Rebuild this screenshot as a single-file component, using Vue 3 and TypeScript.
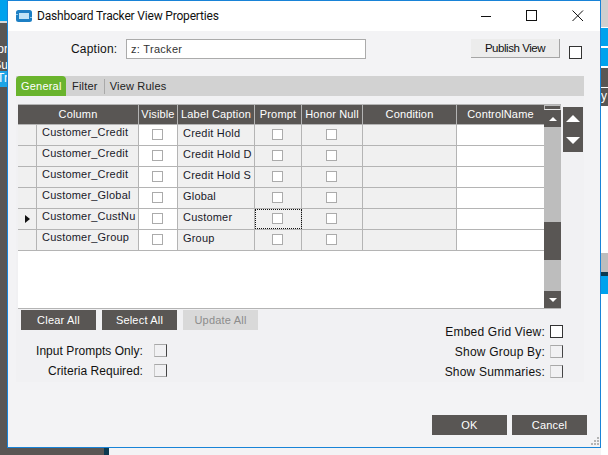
<template>
  <div class="desk">
    <!-- app behind the dialog, only its edges show -->
    <div class="behind-left">
      <div class="bl-blue"></div>
      <div class="bl-gray">
        <span class="bl-t one">or</span>
        <span class="bl-t two">Su</span>
        <span class="bl-t three">Tr</span>
      </div>
    </div>
    <div class="behind-bottom">
      <div class="bb-gray"></div>
      <div class="bb-line"></div>
    </div>
    <div class="behind-right">
      <div class="br-a"></div>
      <div class="br-b"></div>
      <div class="br-b second"></div>
      <div class="br-c"></div>
      <div class="br-d"><span>y</span></div>
      <div class="br-e"></div>
      <div class="br-f"></div>
      <div class="br-g"></div>
      <div class="br-h"></div>
    </div>

    <div class="dialog">
      <div class="titlebar">
        <svg class="app-icon" width="16" height="12" viewBox="0 0 16 12">
          <rect x="0" y="0" width="16" height="12" rx="2.5" fill="#1c7fc4" />
          <rect x="3" y="3" width="10" height="6" fill="#bfe3f7" />
          <rect x="0" y="4" width="2" height="1" fill="#8fc8ec" />
          <rect x="14" y="7" width="2" height="1" fill="#8fc8ec" />
        </svg>
        <span class="title">Dashboard Tracker View Properties</span>
        <div class="win-btns">
          <svg width="12" height="12" viewBox="0 0 12 12"><path d="M1 6.5H11" stroke="#111" fill="none" /></svg>
          <svg width="12" height="12" viewBox="0 0 12 12"><rect x="0.5" y="0.5" width="10" height="10" stroke="#111" fill="none" /></svg>
          <svg width="12" height="12" viewBox="0 0 12 12"><path d="M0.5 0.5L11 11M11 0.5L0.5 11" stroke="#111" fill="none" /></svg>
        </div>
      </div>

      <div class="body">
        <div class="caption-row">
          <label class="caption-label">Caption:</label>
          <div class="caption-input">z: Tracker</div>
          <button class="publish">Publish View</button>
          <span class="box dark big"></span>
        </div>

        <div class="panel">
          <div class="tabs">
            <span class="tab active">General</span>
            <span class="tab">Filter</span>
            <span class="tab-sep"></span>
            <span class="tab">View Rules</span>
          </div>

          <div class="grid-row">
            <div class="grid-wrap">
              <div class="grid">
                <div class="row head">
                  <div v-for="c in columns" :key="c.key" class="cell" :class="c.key">{{ c.title }}</div>
                </div>
                <div v-for="(r, i) in rows" :key="i" class="row">
                  <div class="cell sel"><span v-if="r.current" class="marker"></span></div>
                  <div class="cell col gray"><span class="clip">{{ r.column }}</span></div>
                  <div class="cell vis center"><span class="box"></span></div>
                  <div class="cell label gray"><span class="clip">{{ r.label }}</span></div>
                  <div class="cell prompt gray center" :class="{ focus: r.current }"><span class="box"></span></div>
                  <div class="cell honor gray center"><span class="box"></span></div>
                  <div class="cell cond gray"></div>
                  <div class="cell ctrl"></div>
                </div>
              </div>
              <div class="scrollbar">
                <div class="sb-top"></div>
                <div class="sb-btn"><span class="tri up small"></span></div>
                <div class="sb-track"></div>
                <div class="sb-thumb"></div>
                <div class="sb-track low"></div>
                <div class="sb-btn"><span class="tri down small"></span></div>
              </div>
            </div>
            <div class="move">
              <span class="tri up"></span>
              <span class="tri down"></span>
            </div>
          </div>

          <div class="lower">
            <div class="lower-left">
              <div class="btn-row">
                <button class="dk">Clear All</button>
                <button class="dk">Select All</button>
                <button class="dk off">Update All</button>
              </div>
              <div class="opts left-opts">
                <div class="opt"><span>Input Prompts Only:</span><span class="box soft"></span></div>
                <div class="opt"><span>Criteria Required:</span><span class="box soft"></span></div>
              </div>
            </div>
            <div class="opts right-opts">
              <div class="opt"><span>Embed Grid View:</span><span class="box dark"></span></div>
              <div class="opt"><span>Show Group By:</span><span class="box soft"></span></div>
              <div class="opt"><span>Show Summaries:</span><span class="box soft"></span></div>
            </div>
          </div>
        </div>

        <div class="footer">
          <button class="dk">OK</button>
          <button class="dk">Cancel</button>
        </div>
      </div>
      <svg class="grip" width="9" height="9" viewBox="0 0 9 9">
        <path d="M7 0h2v2H7zM4 3h2v2H4zM7 3h2v2H7zM1 6h2v2H1zM4 6h2v2H4zM7 6h2v2H7z" fill="#b4b4b4" />
      </svg>
    </div>
  </div>
</template>

<script setup lang="ts">
interface Row {
  column: string
  label: string
  current?: boolean
}

// the Column header also spans the row selector column
const columns = [
  { key: 'col-head', title: 'Column' },
  { key: 'vis', title: 'Visible' },
  { key: 'label', title: 'Label Caption' },
  { key: 'prompt', title: 'Prompt' },
  { key: 'honor', title: 'Honor Null' },
  { key: 'cond', title: 'Condition' },
  { key: 'ctrl', title: 'ControlName' }
]

const rows: Row[] = [
  { column: 'Customer_Credit', label: 'Credit Hold' },
  { column: 'Customer_Credit', label: 'Credit Hold D' },
  { column: 'Customer_Credit', label: 'Credit Hold S' },
  { column: 'Customer_Global', label: 'Global' },
  { column: 'Customer_CustNu', label: 'Customer', current: true },
  { column: 'Customer_Group', label: 'Group' }
]
</script>

<style>
html,
body {
  margin: 0;
  background: #fff;
}
</style>

<style scoped>
.desk {
  position: relative;
  width: 608px;
  height: 455px;
  overflow: hidden;
  background: #f3f3f5;
  font-family: "Liberation Sans", Arial, sans-serif;
  font-size: 11px;
  color: #111;
}

/* backdrop */
.behind-left {
  position: absolute;
  left: 0;
  top: 0;
  width: 8px;
  height: 455px;
  display: flex;
  flex-direction: column;
}
.bl-blue {
  height: 21px;
  background: #00a2ed;
}
.bl-gray {
  position: relative;
  flex: 1;
  background: #595654;
  border-top: 2px solid #d8d8d8;
  overflow: hidden;
}
.bl-t {
  position: absolute;
  right: 0;
  color: #fff;
  font-size: 12px;
  white-space: nowrap;
}
.one { top: 19px; }
.two { top: 35px; }
.three {
  top: 48px;
  left: 0;
  width: 8px;
  height: 16px;
  background: #1ea5e6;
  overflow: hidden;
  direction: rtl;
}
.behind-bottom {
  position: absolute;
  left: 0;
  right: 0;
  top: 448px;
  height: 7px;
  display: flex;
}
.bb-gray {
  width: 104px;
  background: #595654;
}
.bb-line {
  width: 5px;
  background: #0c3a50;
}
.behind-right {
  position: absolute;
  left: 601px;
  top: 0;
  width: 7px;
  height: 455px;
  display: flex;
  flex-direction: column;
  background: #fff;
}
.br-a { height: 27px; background: #cfcfcf; margin-bottom: 1px; }
.br-b { height: 18px; background: #00a2ed; margin-bottom: 2px; }
.br-c { height: 19px; background: #595654; margin-bottom: 1px; }
.br-d {
  height: 18px;
  background: #595654;
  color: #fff;
  font-size: 12px;
  overflow: hidden;
  line-height: 14px;
  padding-top: 1px;
  box-sizing: border-box;
}
.br-e { height: 147px; background: #fff; }
.br-f { height: 19px; background: #bdbdbd; }
.br-g { height: 4px; background: #0c3a50; }
.br-h { height: 18px; background: #00a2ed; }

/* dialog */
.dialog {
  position: absolute;
  left: 7px;
  top: 0;
  width: 592px;
  height: 446px;
  border: 1px solid #1883d7;
  background: #f3f3f5;
  display: flex;
  flex-direction: column;
}
.titlebar {
  height: 30px;
  background: #fff;
  display: flex;
  align-items: center;
  padding-left: 8px;
  flex-shrink: 0;
}
.app-icon {
  margin-right: 5px;
}
.title {
  font-family: Roboto, "Liberation Sans", sans-serif;
  font-size: 12px;
  letter-spacing: -0.18px;
  color: #111;
}
.win-btns {
  margin-left: auto;
  margin-right: 16px;
  display: flex;
  gap: 34px;
}
.win-btns svg {
  display: block;
}

.body {
  flex: 1;
  display: flex;
  flex-direction: column;
  padding: 0 8px;
  position: relative;
}
.caption-row {
  height: 45px;
  display: flex;
  align-items: flex-start;
  flex-shrink: 0;
}
.caption-label {
  margin-left: 55px;
  margin-top: 11px;
  font-size: 12px;
  letter-spacing: 0.2px;
  width: 46px;
  white-space: nowrap;
}
.caption-input {
  margin-left: 9px;
  margin-top: 8px;
  width: 234px;
  height: 18px;
  border: 1px solid #ababab;
  background: #fff;
  line-height: 18px;
  padding-left: 4px;
  font-size: 11px;
  letter-spacing: 0.3px;
  color: #333;
}
.publish {
  margin-left: 105px;
  margin-top: 8px;
  width: 89px;
  height: 19px;
  background: #ececec;
  border: 0;
  border-right: 1px solid #a5a5a5;
  border-bottom: 1px solid #a5a5a5;
  font: 11.5px "Liberation Sans", Arial, sans-serif;
  letter-spacing: -0.45px;
  color: #111;
  padding: 0;
}
.big {
  margin-left: 9px;
  margin-top: 15px;
}

.panel {
  height: 306px;
  width: 568px;
  display: flex;
  flex-direction: column;
  flex-shrink: 0;
  background: #f1f1f3;
}
.tabs {
  height: 20px;
  background: #d2d2d2;
  display: flex;
  align-items: center;
  flex-shrink: 0;
}
.tab {
  font-size: 11px;
  letter-spacing: 0.2px;
  padding: 0 6px;
  line-height: 20px;
  color: #222;
}
.tab.active {
  width: 50px;
  box-sizing: border-box;
  background: #6ab42d;
  color: #fff;
  border-radius: 4px 4px 0 0;
  padding: 0 0 0 5px;
}
.tab-sep {
  width: 1px;
  height: 15px;
  background: #a9a9a9;
}
.tab-sep + .tab {
  padding-left: 5px;
}

.grid-row {
  display: flex;
  align-items: flex-start;
  margin-top: 8px;
  margin-left: 2px;
  flex-shrink: 0;
}
.grid-wrap {
  width: 543px;
  height: 203px;
  background: #fff;
  border-top: 1px solid #b4b4b4;
  border-bottom: 1px solid #b4b4b4;
  display: flex;
}
.grid {
  width: 526px;
  flex-shrink: 0;
}
.row {
  display: flex;
  height: 21px;
  border-bottom: 1px solid #b4b4b4;
  box-sizing: border-box;
}
.row.head {
  height: 20px;
  background: #595654;
}
.cell {
  box-sizing: border-box;
  border-right: 1px solid #b4b4b4;
  flex-shrink: 0;
  overflow: hidden;
  white-space: nowrap;
  position: relative;
}
.head .cell {
  color: #fff;
  text-align: center;
  line-height: 18px;
  font-size: 11px;
  letter-spacing: 0.15px;
}
.cell.sel { width: 19px; background: #f0f0f0; }
.cell.col-head { width: 121px; }
.cell.col { width: 102px; }
.cell.vis { width: 39px; }
.cell.label { width: 77px; }
.cell.prompt { width: 47px; }
.cell.honor { width: 61px; }
.cell.cond { width: 94px; }
.cell.ctrl { width: 87px; border-right: 0; }
.gray { background: #f0f0f0; }
.center {
  display: flex;
  align-items: center;
  justify-content: center;
}
.center .box {
  margin: 0 1px 1px 0;
}
.clip {
  display: block;
  padding-left: 5px;
  line-height: 15px;
  font-size: 11px;
  letter-spacing: 0.2px;
  color: #1a1a2a;
}
.label .clip {
  line-height: 17px;
}
.focus {
  outline: 1px dotted #111;
  outline-offset: -1px;
}
.marker {
  position: absolute;
  left: 7px;
  top: 6px;
  width: 0;
  height: 0;
  border-left: 5px solid #111;
  border-top: 4px solid transparent;
  border-bottom: 4px solid transparent;
}
.box {
  display: block;
  width: 9px;
  height: 9px;
  border: 1px solid #ababab;
  background: #fff;
  flex-shrink: 0;
}
.box.dark {
  width: 11px;
  height: 11px;
  border-color: #333;
}
.box.soft {
  width: 11px;
  height: 11px;
  background: #f1f1f3;
  border-color: #a8a8a8 #444 #a8a8a8 #c8c8c8;
}

.scrollbar {
  width: 17px;
  background: #bdbdbd;
  display: flex;
  flex-direction: column;
  flex-shrink: 0;
}
.sb-top {
  height: 5px;
  box-sizing: border-box;
  background: #595654;
  border: 1px solid #bdbdbd;
  border-bottom-color: #e8e8e8;
}
.sb-btn {
  height: 17px;
  background: #595654;
  display: flex;
  align-items: center;
  justify-content: center;
  flex-shrink: 0;
}
.sb-track {
  height: 95px;
}
.sb-track.low {
  height: 31px;
}
.sb-thumb {
  height: 38px;
  background: #595654;
}
.move {
  width: 20px;
  height: 45px;
  margin-left: 2px;
  margin-top: 3px;
  background: #595654;
  display: flex;
  flex-direction: column;
  align-items: center;
  padding-top: 8px;
  box-sizing: border-box;
  gap: 15px;
}
.tri {
  display: block;
  width: 0;
  height: 0;
  border-left: 7px solid transparent;
  border-right: 7px solid transparent;
}
.tri.up { border-bottom: 7px solid #fff; }
.tri.down { border-top: 7px solid #fff; }
.tri.small {
  border-left-width: 4px;
  border-right-width: 4px;
}
.tri.up.small { border-bottom-width: 4px; }
.tri.down.small { border-top-width: 4px; }

.lower {
  display: flex;
  justify-content: space-between;
  flex: 1;
  margin-top: 1px;
}
.lower-left {
  padding-left: 5px;
}
.btn-row {
  display: flex;
  gap: 6px;
}
button.dk {
  width: 75px;
  height: 20px;
  border: 0;
  background: #595654;
  color: #fff;
  font: 11px "Liberation Sans", Arial, sans-serif;
  letter-spacing: 0.2px;
  padding: 0;
}
button.dk.off {
  background: #d9d9d9;
  color: #8c8c8c;
}
.opts {
  display: flex;
  flex-direction: column;
  font-size: 12px;
}
.opt {
  height: 20px;
  display: flex;
  align-items: center;
  justify-content: flex-end;
}
.opt .box {
  margin-left: 5px;
  margin-bottom: 2px;
}
.left-opts {
  margin-top: 11px;
  width: 146px;
  letter-spacing: 0.05px;
}
.left-opts .opt .box {
  margin-left: 11px;
}
.right-opts {
  margin-top: 12px;
  margin-right: 21px;
  letter-spacing: 0.2px;
}

.footer {
  display: flex;
  justify-content: flex-end;
  gap: 5px;
  margin-top: 33px;
  margin-right: 5px;
}
.grip {
  position: absolute;
  right: 1px;
  bottom: 1px;
}
</style>
